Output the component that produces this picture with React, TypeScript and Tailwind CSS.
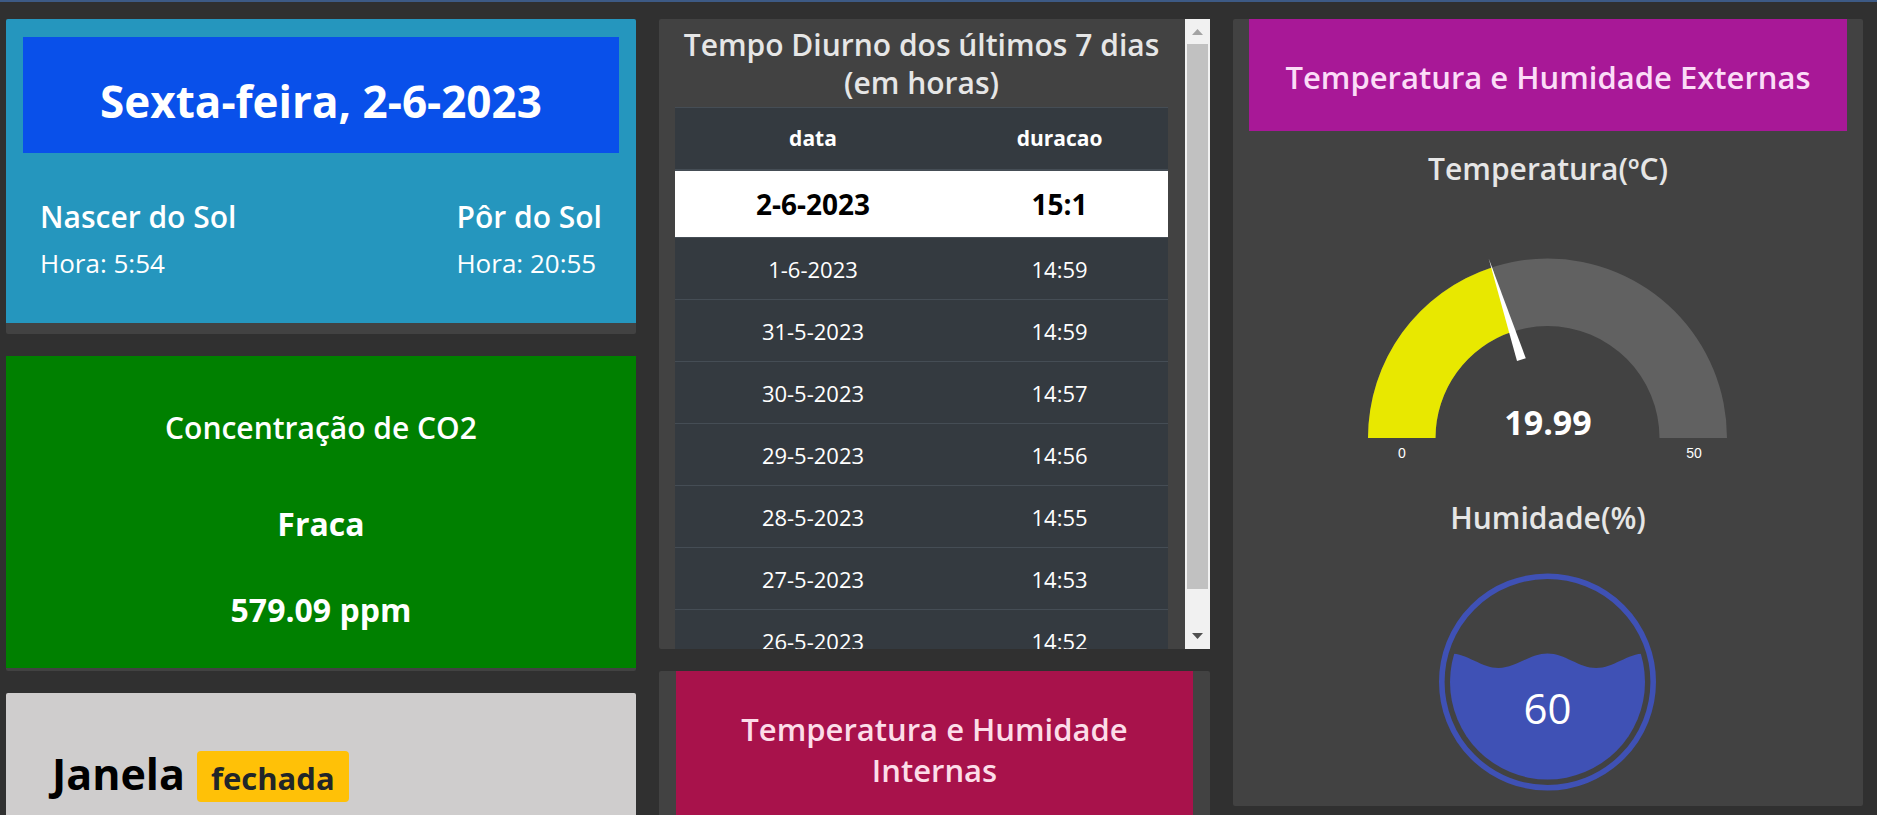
const days: [string, string][] = [
  ["1-6-2023", "14:59"],
  ["31-5-2023", "14:59"],
  ["30-5-2023", "14:57"],
  ["29-5-2023", "14:56"],
  ["28-5-2023", "14:55"],
  ["27-5-2023", "14:53"],
  ["26-5-2023", "14:52"],
];

function SunCard() {
  return (
    <section className="rounded-xs bg-[#424242] pb-[11px]">
      <div className="rounded-t-xs bg-[#2596be] px-[17px] pt-[18px] pb-10">
        <h1 className="bg-[#0950ea] pt-[36px] pb-[24px] text-center text-[44px] leading-[56px] font-bold">
          Sexta-feira, 2-6-2023
        </h1>
        <div className="mt-[45px] flex justify-between px-[17px]">
          <div>
            <h2 className="text-[30px] leading-[38px] font-semibold">Nascer do Sol</h2>
            <p className="mt-[7px] text-[26px] leading-10">Hora: 5:54</p>
          </div>
          <div>
            <h2 className="text-[30px] leading-[38px] font-semibold">Pôr do Sol</h2>
            <p className="mt-[7px] text-[26px] leading-10">Hora: 20:55</p>
          </div>
        </div>
      </div>
    </section>
  );
}

function Co2Card() {
  return (
    <section className="rounded-xs bg-[#424242] pb-[3px] text-center">
      <div className="bg-[#008000] px-4 pt-[52px] pb-[38px]">
        <h2 className="text-[30px] leading-10 font-semibold">Concentração de CO2</h2>
        <p className="mt-14 text-[32px] leading-10 font-bold">Fraca</p>
        <p className="mt-[46px] text-[32px] leading-10 font-bold">579.09 ppm</p>
      </div>
    </section>
  );
}

function WindowCard() {
  return (
    <section className="grow rounded-t-xs bg-[#cfcdcd] px-[46px] pt-[55px] text-black">
      <h2 className="flex items-baseline gap-3 text-[43px] leading-[51px] font-bold">
        Janela
        <span className="rounded bg-[#ffc107] px-[14px] pt-[5px] pb-px text-[31px] leading-[45px] text-[#212529]">
          fechada
        </span>
      </h2>
    </section>
  );
}

function DaylightCard() {
  return (
    <section className="flex h-[630px] rounded-xs bg-[#424242]">
      <div className="grow overflow-hidden pr-[17px] pl-4">
        <h2 className="pt-[7px] text-center text-[30px] leading-[38px] font-semibold text-[#e6e6e6]">
          Tempo Diurno dos últimos 7 dias (em horas)
        </h2>
        <table className="mt-[5px] w-full table-fixed border-collapse bg-[#343a40] text-center text-[22px] leading-8">
          <thead>
            <tr className="h-[62px] border-t border-b-2 border-[#454d55] text-[21px]">
              <th className="w-[56%] font-bold">data</th>
              <th className="font-bold">duracao</th>
            </tr>
          </thead>
          <tbody>
            <tr className="h-[68px] bg-white text-[28px] font-bold text-black">
              <td>2-6-2023</td>
              <td>15:1</td>
            </tr>
            {days.map(([date, hours]) => (
              <tr key={date} className="h-[62px] border-t border-[#454d55]">
                <td>{date}</td>
                <td>{hours}</td>
              </tr>
            ))}
          </tbody>
        </table>
      </div>
      <div className="flex w-[25px] shrink-0 flex-col items-center bg-[#f1f1f1]">
        <svg className="h-[25px] w-[25px] shrink-0" viewBox="0 0 25 25" aria-hidden="true">
          <path d="M7 16L12.500 10L18 16Z" fill="#a3a3a3" />
        </svg>
        <div className="h-[545px] w-[21px] bg-[#c1c1c1]" />
        <svg className="mt-auto h-[25px] w-[25px] shrink-0" viewBox="0 0 25 25" aria-hidden="true">
          <path d="M7 9L12.500 15L18 9Z" fill="#505050" />
        </svg>
      </div>
    </section>
  );
}

function IndoorCard() {
  return (
    <section className="grow rounded-t-xs bg-[#424242] px-[17px]">
      <h2 className="h-full bg-[#a8124b] px-12 pt-[38px] text-center text-[31px] leading-[41px] font-semibold text-[#fcdde8]">
        Temperatura e Humidade Internas
      </h2>
    </section>
  );
}

function Gauge() {
  return (
    <svg
      className="mx-auto h-[230px] w-[400px] font-['Liberation_Sans',sans-serif]"
      viewBox="0 0 400 230"
      role="img"
      aria-label="Temperatura"
    >
      <path d="M20 200A179.500 179.500 0 0 1 379 200H311.500A112 112 0 0 0 87.500 200Z" fill="#616161" />
      <path d="M20 200A179.500 179.500 0 0 1 143.900 29.400L164.800 93.500A112 112 0 0 0 87.500 200Z" fill="#e8e800" />
      <path d="M140.700 20.500L177.800 120.300L169 123Z" fill="#fff" />
      <text
        x="200"
        y="197"
        textAnchor="middle"
        fill="#fff"
        className="font-['Open_Sans',sans-serif] text-[34px] font-bold"
      >
        19.99
      </text>
      <text x="54" y="220" textAnchor="middle" fill="#fff" className="text-[14px]">
        0
      </text>
      <text x="346" y="220" textAnchor="middle" fill="#fff" className="text-[14px]">
        50
      </text>
    </svg>
  );
}

function LiquidGauge() {
  return (
    <svg className="mx-auto h-[218px] w-[218px]" viewBox="0 0 218 218" role="img" aria-label="Humidade">
      <defs>
        <clipPath id="liquid">
          <circle cx="108.500" cy="109" r="97.500" />
        </clipPath>
      </defs>
      <circle cx="108.500" cy="109" r="105.700" fill="none" stroke="#3f51b5" strokeWidth="5.600" />
      <path
        clipPath="url(#liquid)"
        fill="#3f51b5"
        d="M11 80.500C28.500 80.500 42.500 95 59.700 95S91 80.500 108.500 80.500S140 95 157.200 95S188.500 80.500 206 80.500V218H11Z"
      />
      <text x="108.500" y="151" textAnchor="middle" fill="#fff" className="text-[42px]">
        60
      </text>
    </svg>
  );
}

function OutdoorCard() {
  return (
    <section className="rounded-xs bg-[#424242] px-4 pb-[15px] text-center font-semibold text-[#e6e6e6]">
      <h2 className="bg-[#a81897] pt-[38px] pb-[33px] text-[31px] leading-[41px] text-[#fbdcf7]">
        Temperatura e Humidade Externas
      </h2>
      <h3 className="mt-[18px] text-[30px] leading-10">Temperatura(ºC)</h3>
      <div className="mt-[49px] font-normal">
        <Gauge />
      </div>
      <h3 className="mt-[30px] text-[30px] leading-10">Humidade(%)</h3>
      <div className="mt-[35px] font-normal">
        <LiquidGauge />
      </div>
    </section>
  );
}

export default function App() {
  return (
    <main className="h-screen overflow-hidden border-t-2 border-[#3d5a85] bg-[#303030] pt-[17px] pr-[14px] pl-[6px] font-['Open_Sans','Noto_Sans',sans-serif] text-white">
      <div className="grid h-full grid-cols-[8fr_7fr_8fr] items-start gap-[23px]">
        <div className="flex h-full flex-col gap-[22px]">
          <SunCard />
          <Co2Card />
          <WindowCard />
        </div>
        <div className="flex h-full flex-col gap-[22px]">
          <DaylightCard />
          <IndoorCard />
        </div>
        <OutdoorCard />
      </div>
    </main>
  );
}
